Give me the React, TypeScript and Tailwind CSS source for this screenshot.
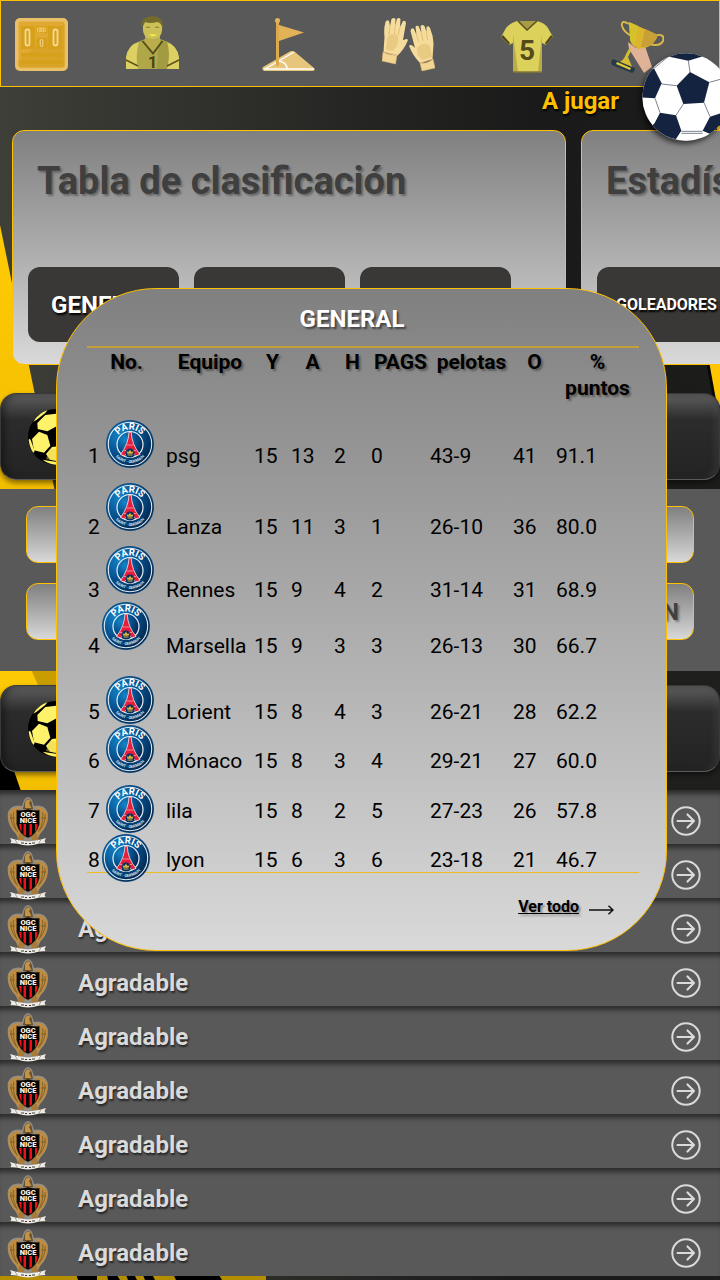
import React from "react";

type Team = {
  pos: number;
  name: string;
  stats: string[];
  row: string;
  crest: string;
};

const teams: Team[] = [
  { pos: 1, name: "psg", stats: ["15", "13", "2", "0", "43-9", "41", "91.1"], row: "h-[67px]", crest: "" },
  { pos: 2, name: "Lanza", stats: ["15", "11", "3", "1", "26-10", "36", "80.0"], row: "h-[71px]", crest: "mb-2" },
  { pos: 3, name: "Rennes", stats: ["15", "9", "4", "2", "31-14", "31", "68.9"], row: "h-[63px]", crest: "mb-2" },
  { pos: 4, name: "Marsella", stats: ["15", "9", "3", "3", "26-13", "30", "66.7"], row: "h-[56px]", crest: "mb-2 -ml-1" },
  { pos: 5, name: "Lorient", stats: ["15", "8", "4", "3", "26-21", "28", "62.2"], row: "h-[66px]", crest: "" },
  { pos: 6, name: "Mónaco", stats: ["15", "8", "3", "4", "29-21", "27", "60.0"], row: "h-[49px]", crest: "" },
  { pos: 7, name: "lila", stats: ["15", "8", "2", "5", "27-23", "26", "57.8"], row: "h-[50px]", crest: "-mb-2.5" },
  { pos: 8, name: "lyon", stats: ["15", "6", "3", "6", "23-18", "21", "46.7"], row: "h-[49px]", crest: "-mb-2.5 -ml-1" },
];

const headings = ["Equipo", "Y", "A", "H", "PAGS", "pelotas", "O", "% puntos"];

function Backdrop() {
  return (
    <svg className="absolute inset-0 h-full w-full" viewBox="0 0 720 1280" preserveAspectRatio="none" aria-hidden="true">
      <defs>
        <linearGradient id="night" x1="0" y1="0" x2="1" y2="0">
          <stop offset="0" stopColor="#3f3f39" />
          <stop offset="0.5" stopColor="#252523" />
          <stop offset="0.75" stopColor="#1a1a1a" />
          <stop offset="1" stopColor="#1c1c1b" />
        </linearGradient>
        <linearGradient id="gold" x1="0" y1="0" x2="0" y2="1">
          <stop offset="0" stopColor="#ffcb05" />
          <stop offset="1" stopColor="#f2bd00" />
        </linearGradient>
      </defs>
      <rect width="720" height="1280" fill="url(#night)" />
      <path d="M0 225 L55 492 L0 492Z" fill="url(#gold)" />
      <path d="M0 660H300V800H0Z" fill="url(#gold)" />
      <path d="M30 667L60 735V667Z" fill="#c99d00" />
      <path d="M0 730L24 800H0Z" fill="#000" />
      <path d="M300 660H720V800H300Z" fill="#1f1f1d" />
      <path d="M704 350L714 404L720 410V350Z" fill="#070707" />
      <path d="M707 350L716 400L720 406V350Z" fill="#ffc600" />
      <path d="M717 126H720V132H717Z" fill="#ffc600" />
      <path d="M0 1270H266V1280H0Z" fill="#b58e00" />
      <path d="M75 1270H97V1280H78Z M106 1270H114L120 1280H108Z M124 1270H132L137 1280H128Z M141 1270H150L155 1280H145Z M160 1270H216L222 1280H176L172 1272Z" fill="#000" />
    </svg>
  );
}

function ScoreboardIcon() {
  return (
    <svg className="h-[53px] w-[53px]" viewBox="0 0 53 53" aria-hidden="true">
      <rect width="53" height="53" rx="5" fill="#e9c06a" />
      <rect x="3.5" y="3.5" width="46" height="46" rx="2.5" fill="#e0aa32" />
      <path d="M49.5 6V47q0 2.500-2.500 2.500H6Q3.500 49.500 3.500 47V43Z" fill="#d9a328" />
      <g fill="#d6a01b">
        <path d="M6 8h14v23H6zM33 8h14v23H33zM21 8h11v7H21zM21.500 20h10v10h-10zM6 35h41v4H6zM6 42h41v4H6z" />
      </g>
      <g fill="none" stroke="#f3d994">
        <rect x="10.500" y="11.500" width="4" height="16" rx="2" strokeWidth="1.800" />
        <rect x="38.500" y="11.500" width="4" height="16" rx="2" strokeWidth="1.800" />
        <rect x="25.200" y="21.500" width="2.600" height="7" rx="1.300" strokeWidth="1" />
        <path d="M22.500 9.500v5M24.200 9.500h1.200v4.500h-1.200zM26.600 9.500v4.500M28 9.500h1v4.500h-1zM30.300 9.500v4.500" strokeWidth=".7" />
      </g>
    </svg>
  );
}

function PlayerIcon() {
  return (
    <svg className="h-[53px] w-[53px] overflow-visible" viewBox="0 0 53 53" aria-hidden="true">
      <path d="M1 53V43C2 33 5 28 12 26L19 23H34L42 26Q51 30 52 41L53 53Z" fill="#b0a748" />
      <path d="M0 53V41Q2 29 13 26Q9 40 12 53ZM53 53V41Q51 29 40 26Q44 40 41 53Z" fill="#dcd063" />
      <path d="M33 24L41 26Q45 36 41 53H31Z" fill="#a39b42" />
      <path d="M19 19H34V27L27 36L19 27Z" fill="#b9ae4b" />
      <path d="M16.500 25L27 37.500L36.500 25" fill="none" stroke="#554a1b" strokeWidth="1.800" />
      <path d="M17 10Q16 23 26.500 23Q37 23 36 10L33 4H20Z" fill="#cbbf57" />
      <path d="M16 13C14 7 17 1 24 .5Q38-1 37 13Q35 6 31 6Q25 8 19 6Q16 8 16 13Z" fill="#756c2c" />
      <path d="M20 11.500q2-1 4 0M29 11.500q2-1 4 0" stroke="#847a32" fill="none" />
      <path d="M23 18.500Q27 22 31 18.500Q27 18 23 18.500Z" fill="#fff13c" />
      <path d="M0 44L12 50M53 44L41 50" stroke="#5c521e" strokeWidth="1.400" />
      <text x="26.500" y="51.500" textAnchor="middle" fontFamily="Liberation Sans Narrow, Roboto, sans-serif" fontWeight="700" fontSize="16" fill="#4b4118">1</text>
    </svg>
  );
}

function FlagIcon() {
  return (
    <svg className="h-[53px] w-[53px]" viewBox="0 0 53 53" aria-hidden="true">
      <path d="M2 53Q-1 51 1 49L27 34Q30 32 33 34L52 50Q54 52 51 53Z" fill="#e7c67b" />
      <path d="M2 51H52M3 51L32 34M16 43Q25 44 25 51" fill="none" stroke="#fff" strokeWidth="1.400" />
      <rect x="14" y="3" width="3" height="45" rx="1" fill="#dda94c" />
      <circle cx="15.500" cy="2.500" r="2.500" fill="#e4b45a" />
      <path d="M17 7L42 14.500L17 23Z" fill="#e2b356" />
    </svg>
  );
}

function GlovesIcon() {
  return (
    <svg className="h-[53px] w-[53px]" viewBox="0 0 53 53" aria-hidden="true">
      <g>
        <path d="M1.500 34L2.500 19Q1.500 11 3.500 4Q5 1 7 3L8 8L9.500 1Q12-1 13.500 1L13.200 8L14.800 1Q17-1 18.500 1L18 9L21 3Q23.500 2 24 5L21 22L22 22Q25 20 26 22Q22 32 15 38Z" fill="#f5dc9c" />
        <path d="M5 20Q10 13 16 18Q18 26 11 33L4 32Z" fill="#e9ca82" />
        <path d="M8 8L7 17M13 8L12.500 16M18 9L16 17M2 34L15 37" stroke="#dcb76b" strokeWidth=".8" fill="none" />
        <path d="M1 34Q8 38 15 37L13.500 46L0 43Z" fill="#f2d592" stroke="#dfbd76" strokeWidth=".5" />
      </g>
      <g>
        <path d="M50.500 41L51.500 26Q51.500 18 48 10Q46.500 7 44.500 9L44.500 14L42.500 8Q40.500 6 38.500 8L39.500 15L36.500 8Q34 7 33.500 9L34.500 17L32 11Q29 9 28.500 13L33 30L31 28Q28 26 27 28Q31 38 38 45Z" fill="#f5dc9c" />
        <path d="M35 30Q42 22 48 28L50 39L40 42Q34 37 35 30Z" fill="#e9ca82" />
        <path d="M34.500 17L37 24M39.500 15L41 23M44.500 14L45.500 22M39 45L51 41" stroke="#dcb76b" strokeWidth=".8" fill="none" />
        <path d="M38 45Q46 46 51 41L53 50L40 53Z" fill="#f2d592" stroke="#dfbd76" strokeWidth=".5" />
      </g>
    </svg>
  );
}

function ShirtIcon() {
  return (
    <svg className="h-[53px] w-[53px]" viewBox="0 0 53 53" aria-hidden="true">
      <path d="M16 1H36Q44 3 47 8L52 17L45 25L41 23V52H12V23L8 25L0 17L5 8Q9 3 16 1Z" fill="#dcd15b" />
      <path d="M0 17L2 15L9 23L8 25ZM52 17L50 15L44 23L45 25Z" fill="#554a1b" />
      <path d="M12 14L17 52H12ZM41 14L37 52H41Z" fill="#b7ac48" />
      <path d="M16 1H36L26 10Z" fill="#a79d45" />
      <path d="M17 1L26 10L36 1" fill="none" stroke="#5a4f1d" strokeWidth="1.500" />
      <path d="M12 52H41" stroke="#837934" strokeWidth="1.500" />
      <text x="26" y="40" textAnchor="middle" fontFamily="Liberation Sans Narrow, Roboto, sans-serif" fontWeight="700" fontSize="28" fill="#544a1c">5</text>
    </svg>
  );
}

function TrophyIcon() {
  return (
    <svg className="h-[53px] w-[53px]" viewBox="0 0 53 53" aria-hidden="true">
      <path d="M18 4Q10-1 11 6Q13 13 23 17M46 15Q54 14 52 21Q49 27 38 24" fill="none" stroke="#d9b84a" strokeWidth="2" />
      <path d="M17 22L25 28L34 26L41 47L33 53L18 29Z" fill="#e0b398" />
      <path d="M18 2L47 15Q43 27 32 28L27 29Q18 24 19 17Z" fill="#dcb52e" />
      <path d="M34 9L47 15Q42 28 30 27Z" fill="#c99f38" />
      <path d="M18 2L27 6L24 25Q18 22 19 17Z" fill="#d5c22b" />
      <path d="M20 31L17 37L22 49L6 43Q13 41 15 34L19 27Z" fill="#d4bd34" />
      <path d="M2 39L24 48Q24 52 21 53L1 45Q-1 42 2 39Z" fill="#273b47" />
      <path d="M6 42L20 48L19 50L5 44Z" fill="#e2c936" />
    </svg>
  );
}

function MatchBall() {
  return (
    <svg className="h-22 w-22" viewBox="0 0 264 264" aria-hidden="true">
      <defs>
        <clipPath id="ballClip"><circle cx="132" cy="132" r="131" /></clipPath>
      </defs>
      <g clipPath="url(#ballClip)">
        <rect width="264" height="264" fill="#fff" />
        <g fill="#14233f">
          <path d="M144 57L202 88L186 149L124 153L104 98Z" />
          <path d="M36 46L59 91L39 136L-2 133V70Z" />
          <path d="M54 179L102 187L118 233L98 264L20 230L38 210Z" />
          <path d="M204 191L246 178L264 150V240L220 250L182 233Z" />
          <path d="M75 10L139 23L188 8V-4H70Z" />
        </g>
        <g fill="none" stroke="#606a7b" strokeWidth="2.500">
          <path d="M139 23L144 57M59 93L104 98M124 153L102 187M186 149L204 191M202 88L246 76M39 136L54 179M36 46L75 14M118 235H182M118 241H182M246 76L264 90" />
        </g>
      </g>
    </svg>
  );
}

function GoldBall() {
  return (
    <svg className="h-14 w-14 shrink-0" viewBox="0 0 168 168" aria-hidden="true">
      <circle cx="84" cy="84" r="84" fill="#000" />
      <g fill="#fff26b">
        <path d="M28 42L52 18L84 14L102 26L100 44L58 67L29 60Z" />
        <path d="M12 90L33 68L58 78L67 110L48 131L18 124Z" />
        <path d="M54 135L72 114L104 110L120 128L98 158L66 152Z" />
        <path d="M16 38Q32 12 58 4L52 12L26 32Z" />
        <path d="M2 92Q5 88 8 93L20 126L16 132Q5 116 2 92Z" />
        <path d="M44 152L62 155L94 160L84 167Q62 166 44 152Z" />
        <path d="M112 48L146 50L158 80L142 104L116 92Z" />
      </g>
      <path d="M54 150L66 120L120 126L98 158Z" fill="#e3ce45" opacity=".45" />
    </svg>
  );
}

function ParisCrest({ id }: { id: number }) {
  return (
    <svg className="block h-12 w-12" viewBox="0 0 48 48" role="img" aria-label="PSG">
      <defs>
        <radialGradient id={`pb${id}`} cx="0.3" cy="0.3" r="0.75">
          <stop offset="0" stopColor="#1485c8" />
          <stop offset="0.55" stopColor="#07508d" />
          <stop offset="1" stopColor="#03284f" />
        </radialGradient>
        <path id={`pt${id}`} d="M9.500 24a14.500 14.500 0 0 1 29 0" />
        <path id={`ps${id}`} d="M5 24a19 19 0 0 0 38 0" />
      </defs>
      <circle cx="24" cy="24" r="24" fill="#0a4779" />
      <circle cx="24" cy="24" r="23.200" fill={`url(#pb${id})`} />
      <circle cx="24" cy="24" r="21.700" fill="none" stroke="#dbe8f3" strokeWidth="1.100" />
      <circle cx="24" cy="24.500" r="13" fill={`url(#pb${id})`} stroke="#e8f1f8" strokeWidth="1.200" />
      <path d="M23 12H25.200Q25.500 24 34 34.500L29.500 36Q24 26 18.500 36L14.500 34.500Q22.500 24 23 12Z" fill="#e71d3b" stroke="#f3e9ee" strokeWidth=".8" />
      <path d="M20.500 25H27.500M18 30.500H30" stroke="#f0a2ac" strokeWidth=".8" />
      <circle cx="24" cy="33" r="4.500" fill="#062f5c" />
      <path d="M24 29.500l1.200 2.200 2.300-.2-1 2.200H21.500l-1-2.200 2.300.2zM21.500 34.500h5v1h-5z" fill="#d7b33d" />
      <g fontFamily="Roboto, sans-serif" fontWeight="700" fill="#fff" textAnchor="middle">
        <text fontSize="9.500"><textPath href={`#pt${id}`} startOffset="50%">PARIS</textPath></text>
        <text fontSize="4" fill="#d3e1ee"><textPath href={`#ps${id}`} startOffset="50%">SAINT · GERMAIN</textPath></text>
      </g>
    </svg>
  );
}

function NiceCrest() {
  return (
    <svg className="h-[50px] w-[42px] shrink-0" viewBox="0 0 42 50" role="img" aria-label="OGC Nice">
      <path d="M17 4Q21-2 25 4L27 10Q37 8 40.500 16Q43 28 33 38L30 45H12L9 38Q-1 28 1 16Q5 8 15 10Z" fill="#b9b4aa" opacity=".6" />
      <path d="M17.500 6Q21-1 24.500 6L26 13H16Z" fill="#6b4f27" />
      <path d="M18 6Q21 1 23.500 5L22 7L24.500 12H18Z" fill="#c0924a" />
      <path d="M14 11Q5 10 1.500 17Q0 27 7 35L13 43L14 34L10 16ZM28 11Q37 10 40 17Q42 27 35 35L29 43L28 34L32 16Z" fill="#bd8c40" />
      <path d="M4 18Q3 26 9 34M6.500 16Q5 26 10.500 36M38 18Q39 26 33 34M35.500 16Q37 26 31.500 36M3 22H8M34 22H39" stroke="#634a22" strokeWidth=".6" fill="none" />
      <path d="M13 37L10 44H17L18 40ZM29 37L32 44H25L24 40Z" fill="#a87a3a" />
      <path d="M9.500 14Q15 15 21 13Q27 15 32.500 14V28Q30 38 21 42Q12 38 9.500 28Z" fill="#080605" stroke="#7b5d31" strokeWidth=".5" />
      <path d="M12 28h2.500v8q-2-3-2.500-8zM16.500 28h2.500v12l-2.500-1.500zM22.500 28h2.500v10.500l-2.500 1.500zM28 28h2.500q0 5-2.500 8z" fill="#f0101a" />
      <g fill="#fff4e6" fontFamily="Roboto, sans-serif" fontWeight="900" fontSize="7.500" textAnchor="middle">
        <text x="21" y="20.500">OGC</text>
        <text x="21" y="26.500">NICE</text>
      </g>
      <path d="M3 42L8 43.500L13 44.500Q21 46 29 44.500L34 43.500L39 42L37.500 45L38.500 47L32 47.500Q21 51.500 10 47.500L3.500 47L4.500 45Z" fill="#efece6" />
      <path d="M8 43.500L10 47M34 43.500L32 47" stroke="#8f8a82" strokeWidth=".8" />
      <path d="M14 47h3M18 47.500h2M22 47.500h2M25 47h3" stroke="#403a34" strokeWidth="1.200" />
    </svg>
  );
}

function CircleArrow() {
  return (
    <svg className="h-[30px] w-[30px]" viewBox="0 0 30 30" fill="none" stroke="#dadada" aria-hidden="true">
      <circle cx="15" cy="15" r="13.700" strokeWidth="2" />
      <path d="M6.500 15H23M16.500 8.500L23 15L16.500 21.500" strokeWidth="2.200" strokeLinecap="round" strokeLinejoin="round" />
    </svg>
  );
}

function SectionBar() {
  return (
    <div className="flex h-[87px] items-center rounded-2xl border border-[#3a3a3a] border-b-[#5a5a5a] bg-linear-to-b from-[#606060] via-[#2c2c2c] via-30% to-[#232323] pl-[27px] shadow-[0_3px_5px_rgba(0,0,0,0.45),inset_4px_0_6px_rgba(0,0,0,0.35),inset_-4px_0_6px_rgba(80,80,80,0.35)]">
      <GoldBall />
    </div>
  );
}

const tile =
  "flex h-[75px] shrink-0 items-center justify-center rounded-xl bg-[#3a3836] font-bold text-white [text-shadow:1px_2px_2px_#000]";
const card =
  "h-[235px] shrink-0 rounded-xl border border-[#ffc000] bg-linear-to-b from-[#808080] to-[#d9d9d9] px-[15px] pt-[25px] pb-[22px] flex flex-col justify-between";
const cardTitle =
  "pl-[9px] text-[38px] leading-[50px] font-bold whitespace-nowrap text-[#3f3f3f] [text-shadow:2px_2px_2px_rgba(0,0,0,0.3)]";
const strip =
  "flex h-[57px] w-full items-center justify-end rounded-xl border border-[#ffc000] bg-linear-to-b from-[#808080] to-[#d9d9d9] pr-[14px] text-2xl font-bold text-[#404040] [text-shadow:2px_2px_2px_rgba(0,0,0,0.3)]";

export default function App() {
  return (
    <div className="relative min-h-screen overflow-hidden bg-[#1c1c1b] pb-[3px] font-[Roboto,sans-serif]">
      <Backdrop />
      <div className="relative">
        <header className="h-[87px] border border-[#ffc000] bg-[#595959] pl-[14px]">
          <nav className="grid h-full grid-cols-[111fr_136fr_121fr_119fr_110fr_108fr] items-center pt-px">
            <a href="#marcador" aria-label="Marcador"><ScoreboardIcon /></a>
            <a href="#jugadores" aria-label="Jugadores" className="pb-1"><PlayerIcon /></a>
            <a href="#corner" aria-label="Córner"><FlagIcon /></a>
            <a href="#porteros" aria-label="Porteros"><GlovesIcon /></a>
            <a href="#camisetas" aria-label="Camisetas" className="pt-1"><ShirtIcon /></a>
            <a href="#copas" aria-label="Copas" className="pt-1"><TrophyIcon /></a>
          </nav>
        </header>

        <a href="#jugar" className="relative z-10 flex h-[43px] justify-end pr-[101px] text-2xl leading-7 font-bold text-[#ffc000] [text-shadow:1px_2px_2px_#000]">
          A jugar
          <span className="absolute -top-[34px] -right-[10px] rounded-full shadow-[-2px_3px_5px_rgba(0,0,0,0.6)]">
            <MatchBall />
          </span>
        </a>

        <div className="flex gap-[15px] overflow-hidden pl-3">
          <section className={`${card} w-[554px]`}>
            <h2 className={cardTitle}>Tabla de clasificación</h2>
            <div className="flex gap-[15px]">
              <button className={`${tile} w-[151px] text-2xl`}>GENERAL</button>
              <span className={`${tile} w-[151px]`} />
              <span className={`${tile} w-[151px]`} />
            </div>
          </section>
          <section className={`${card} w-[554px]`}>
            <h2 className={cardTitle}>Estadísticas</h2>
            <div className="flex">
              <button className={`${tile} w-[139px] text-base`}>GOLEADORES</button>
            </div>
          </section>
        </div>

        <div className="pt-7 pb-[9px]"><SectionBar /></div>
        <div className="flex h-[182px] flex-col gap-5 bg-[#595959] px-[26px] pt-[17px]">
          <div className={strip} />
          <button className={strip}>N</button>
        </div>
        <div className="pt-[14px] pb-[18px]"><SectionBar /></div>

        <ul className="bg-[#595959]">
          {Array.from({ length: 9 }, (_, i) => (
            <li key={i} className="h-[54px] shadow-[inset_0_7px_5px_-3px_rgba(0,0,0,0.5)]">
              <a href={`#equipo-${i + 1}`} className="flex h-full items-center pt-2 pr-[19px] pl-[7px]">
                <NiceCrest />
                <span className="flex-1 pl-[29px] text-2xl leading-7 font-bold text-[#dadada] [text-shadow:1px_2px_2px_rgba(0,0,0,0.6)]">
                  {i > 1 ? "Agradable" : ""}
                </span>
                <CircleArrow />
              </a>
            </li>
          ))}
        </ul>
      </div>

      <div
        role="dialog"
        aria-labelledby="dialog-title"
        className="absolute top-[288px] right-[53px] left-[56px] z-20 rounded-[100px] border border-[#ffc000] bg-linear-to-b from-[#808080] to-[#d9d9d9] pt-4 pr-[27px] pb-[31px] pl-[30px] text-black"
      >
        <h2 id="dialog-title" className="pr-[22px] text-center text-2xl leading-7 font-bold text-white [text-shadow:2px_2px_2px_rgba(0,0,0,0.5)]">
          GENERAL
        </h2>
        <div className="mt-[13px] border-t-2 border-[#c4a03c] border-b border-b-[#ecbd20]">
          <table className="w-full table-fixed border-collapse">
            <colgroup>
              <col className="w-[17px]" />
              <col className="w-[62px]" />
              <col className="w-[88px]" />
              <col className="w-[37px]" />
              <col className="w-[43px]" />
              <col className="w-[37px]" />
              <col className="w-[59px]" />
              <col className="w-[83px]" />
              <col className="w-[43px]" />
              <col className="w-[83px]" />
            </colgroup>
            <thead>
              <tr className="h-[53px] align-top text-[21px] leading-[26px] [text-shadow:2px_2px_2px_rgba(0,0,0,0.35)]">
                <th colSpan={2} className="p-0 pt-px">No.</th>
                {headings.map((h) => (
                  <th key={h} className="p-0 pt-px">{h}</th>
                ))}
              </tr>
            </thead>
            <tbody>
              {teams.map((t) => (
                <tr key={t.pos} className={`${t.row} align-bottom text-[21px] leading-6`}>
                  <td className="p-0 pl-px">{t.pos}</td>
                  <td className="p-0">
                    <div className="flex h-6 items-end pl-0.5">
                      <div className={`relative ${t.crest}`}><ParisCrest id={t.pos} /></div>
                    </div>
                  </td>
                  <td className="p-0">{t.name}</td>
                  {t.stats.map((s, i) => (
                    <td key={i} className="p-0">{s}</td>
                  ))}
                </tr>
              ))}
            </tbody>
          </table>
        </div>
        <a href="#ver-todo" className="mt-[22px] mr-[25px] flex items-center justify-end gap-2.5 text-base leading-6 font-bold [text-shadow:2px_2px_2px_rgba(0,0,0,0.35)]">
          <span className="underline">Ver todo</span>
          <svg className="mt-1.5 h-2.5 w-[25px]" viewBox="0 0 25 10" fill="none" stroke="#111" strokeWidth="1.500" aria-hidden="true">
            <path d="M0 5H24M19.500 .8L24 5L19.500 9.200" />
          </svg>
        </a>
      </div>
    </div>
  );
}
